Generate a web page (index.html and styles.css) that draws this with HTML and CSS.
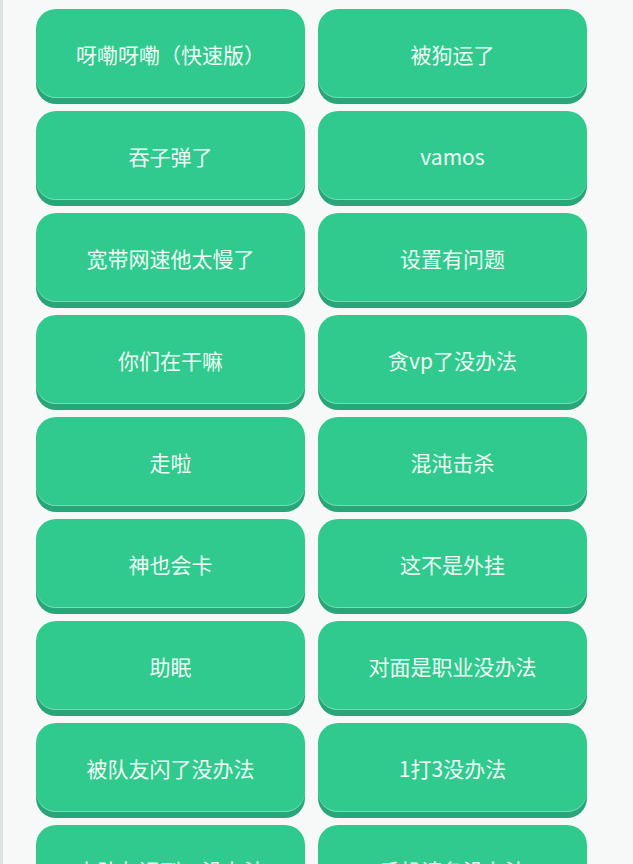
FILE: index.html
```html
<!DOCTYPE html>
<html>
<head>
    <meta charset="UTF-8">
    <title>语音按钮</title>
    <link rel="stylesheet" href="styles.css">
</head>
<body>
    <div class="page">
        <div class="sound-grid">
            <button class="sound-btn">呀嘞呀嘞（快速版）</button>
            <button class="sound-btn">被狗运了</button>
            <button class="sound-btn">吞子弹了</button>
            <button class="sound-btn">vamos</button>
            <button class="sound-btn">宽带网速他太慢了</button>
            <button class="sound-btn">设置有问题</button>
            <button class="sound-btn">你们在干嘛</button>
            <button class="sound-btn">贪vp了没办法</button>
            <button class="sound-btn">走啦</button>
            <button class="sound-btn">混沌击杀</button>
            <button class="sound-btn">神也会卡</button>
            <button class="sound-btn">这不是外挂</button>
            <button class="sound-btn">助眠</button>
            <button class="sound-btn">对面是职业没办法</button>
            <button class="sound-btn">被队友闪了没办法</button>
            <button class="sound-btn">1打3没办法</button>
            <button class="sound-btn">大队友迟到，没办法</button>
            <button class="sound-btn">手机请各没办法</button>
        </div>
    </div>
</body>
</html>
```

FILE: styles.css
```css
:root {
    --page-bg: #f7f9f8;
    --edge-color: #dde4e1;
    --btn-bg: #30ca8e;
    --btn-edge: #29a679;
    --btn-text: #effbf5;
}
body {
    margin: 0;
    padding: 0;
    background-color: var(--page-bg);
    font-family: "Noto Sans CJK SC", "Noto Sans", sans-serif;
    height: 100vh;
    overflow: hidden;
}
.page {
    border-left: 3px solid var(--edge-color);
    min-height: 100vh;
    padding: 9px 0 0 33px;
    box-sizing: border-box;
}
.sound-grid {
    display: grid;
    grid-template-columns: 269px 269px;
    column-gap: 13px;
    row-gap: 13px;
}
.sound-btn {
    height: 89px;
    padding: 0;
    border: none;
    border-radius: 20px;
    background-color: var(--btn-bg);
    color: var(--btn-text);
    font-family: inherit;
    font-size: 21px;
    cursor: pointer;
    /* darker lip under the face */
    box-shadow: inset 0 -1px 0 rgba(255, 255, 255, 0.35), 0 6px 0 var(--btn-edge);
}
```
